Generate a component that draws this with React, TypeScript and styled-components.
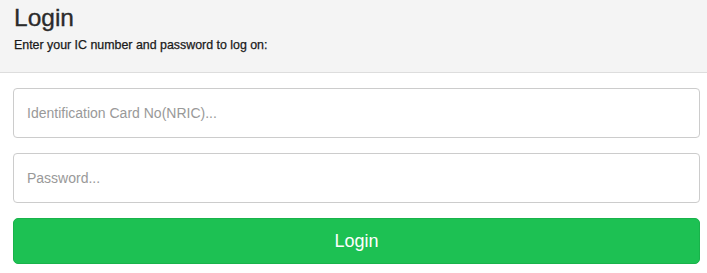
import React from "react";
import styled, { createGlobalStyle } from "styled-components";

const Global = createGlobalStyle`
  html, body { margin: 0; padding: 0; background: #ffffff; }
  body { font-family: "Liberation Sans", Arial, sans-serif; color: #333; }
  * { box-sizing: border-box; }
`;

const Page = styled.div`
  display: flex;
  flex-direction: column;
`;

const Header = styled.header`
  height: 73px;
  background: #f4f4f4;
  border-bottom: 1px solid #dddddd;
  padding: 4px 13px 0 14px;
`;

const Title = styled.h1`
  margin: 0;
  font-size: 24.5px;
  line-height: 28px;
  font-weight: 400;
  color: #2b2b2b;
  -webkit-text-stroke: 0.35px #2b2b2b;
`;

const Subtitle = styled.p`
  margin: 6px 0 0;
  font-size: 12.4px;
  line-height: 14px;
  color: #1a1a1a;
  -webkit-text-stroke: 0.25px #1a1a1a;
`;

const Form = styled.form`
  display: flex;
  flex-direction: column;
  gap: 15px;
  padding: 15px 7px 0 13px;
`;

const Input = styled.input`
  height: 50px;
  width: 100%;
  border: 1px solid #cccccc;
  border-radius: 4px;
  padding: 0 13px;
  font-family: "Liberation Sans", Arial, sans-serif;
  font-size: 14px;
  color: #333;
  background: #fff;
  outline: none;
  &::placeholder { color: #999999; }
`;

const Button = styled.button`
  height: 46px;
  width: 100%;
  border: 1px solid #19b34b;
  border-radius: 5px;
  background: #1dc153;
  color: #ffffff;
  font-family: "Liberation Sans", Arial, sans-serif;
  font-size: 18px;
  cursor: pointer;
`;

export default function App() {
  return (
    <Page>
      <Global />
      <Header>
        <Title>Login</Title>
        <Subtitle>Enter your IC number and password to log on:</Subtitle>
      </Header>
      <Form onSubmit={(e) => e.preventDefault()}>
        <Input type="text" placeholder="Identification Card No(NRIC)..." />
        <Input type="password" placeholder="Password..." />
        <Button type="submit">Login</Button>
      </Form>
    </Page>
  );
}
